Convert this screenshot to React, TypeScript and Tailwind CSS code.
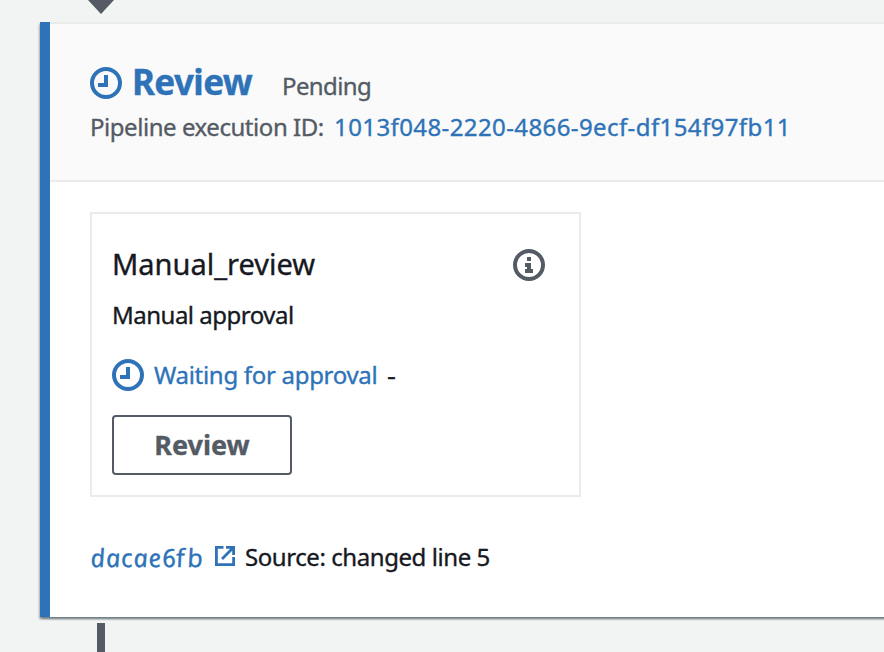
function ClockIcon({ className }: { className?: string }) {
  return (
    <svg className={className} width="32" height="32" viewBox="0 0 32 32" fill="none" stroke="currentColor" strokeWidth="4">
      <circle cx="16" cy="16" r="14" />
      <path d="M16 8v10H8" />
    </svg>
  );
}

function InfoIcon() {
  return (
    <svg className="mt-[5px] shrink-0 text-[#545b64]" width="32" height="32" viewBox="0 0 32 32">
      <circle cx="16" cy="16" r="14" fill="none" stroke="currentColor" strokeWidth="4" />
      <path fill="currentColor" d="M14 8h4v4h-4zM12 14h6v6h2v4h-8v-4h2v-2h-2z" />
    </svg>
  );
}

function ExternalIcon() {
  return (
    <svg className="mt-[7px] ml-[10px] shrink-0 text-[#2e73b8]" width="20" height="20" viewBox="0 0 20 20" fill="none" stroke="currentColor" strokeWidth="2.8">
      <path d="M8.5 1.4H1.4v17.2h17.2V11M11 1.4h7.6V9M18.4 1.6L7 13" />
    </svg>
  );
}

export default function App() {
  return (
    <div className="flex h-[652px] w-[884px] flex-col overflow-hidden bg-[#f2f3f3] pl-10 font-['Noto_Sans',sans-serif] text-2xl leading-9 whitespace-nowrap text-[#16191f] [-webkit-text-stroke:0.35px_currentColor]">
      <div className="h-[22px] shrink-0 pl-12">
        <svg width="26" height="14" viewBox="0 0 26 14">
          <path d="M0 0h26L13 14z" fill="#545b64" />
        </svg>
      </div>
      <section className="h-[595px] w-[860px] shrink-0 border-l-[10px] border-[#2e73b8] bg-white shadow-[0_2px_2px_0_rgba(0,28,36,0.35),2px_2px_2px_0_rgba(0,28,36,0.15),-1px_2px_2px_0_rgba(0,28,36,0.2)]">
        <header className="h-40 border-y-2 border-[#ebebeb] bg-[#fafafa] pt-[38px] pl-10">
          <div className="flex h-10 items-baseline leading-10">
            <ClockIcon className="mt-[5px] shrink-0 self-start text-[#2e73b8]" />
            <h1 className="ml-[10px] w-[120px] text-[35px] font-bold tracking-[-0.6px] text-[#2e73b8]">Review</h1>
            <span className="ml-[30px] tracking-[-0.6px] text-[#545b64]">Pending</span>
          </div>
          <div className="mt-[7px] flex text-[#545b64]">
            <span className="w-[244px] tracking-[-0.45px]">Pipeline execution ID:</span>
            <a className="tracking-[0.4px] text-[#2e73b8]">1013f048-2220-4866-9ecf-df154f97fb11</a>
          </div>
        </header>
        <main className="pt-[30px] pl-10">
          <article className="h-[285px] w-[491px] border-2 border-[#ebebeb] pt-[30px] pr-[34px] pl-5">
            <div className="flex h-10 justify-between">
              <h2 className="text-[29px] leading-10">Manual_review</h2>
              <InfoIcon />
            </div>
            <p className="mt-[13px] tracking-[-0.5px]">Manual approval</p>
            <div className="mt-6 flex">
              <ClockIcon className="mt-[2px] shrink-0 text-[#2e73b8]" />
              <span className="ml-[10px] w-[233px] tracking-[-0.3px] text-[#2e73b8]">Waiting for approval</span>
              <span className="origin-left scale-x-115">-</span>
            </div>
            <button className="mt-[22px] flex h-[60px] w-[180px] items-center justify-center rounded-[4px] border-2 border-[#545b64] text-[27px] font-bold text-[#545b64]">Review</button>
          </article>
          <div className="mt-[42px] flex">
            <a className="flex w-[115px] text-[25px] text-[#2e73b8]">
              <span className="inline-block w-[86px] origin-left skew-x-[8deg] tracking-[1px] italic">dacae6</span>
              <span className="inline-block skew-x-[-3deg] tracking-[3px]">fb</span>
            </a>
            <ExternalIcon />
            <span className="ml-[10px] tracking-[-0.43px]">Source: changed line 5</span>
          </div>
        </main>
      </section>
      <div className="mt-[6px] ml-[57px] h-[29px] w-2 shrink-0 bg-[#545b64]" />
    </div>
  );
}
